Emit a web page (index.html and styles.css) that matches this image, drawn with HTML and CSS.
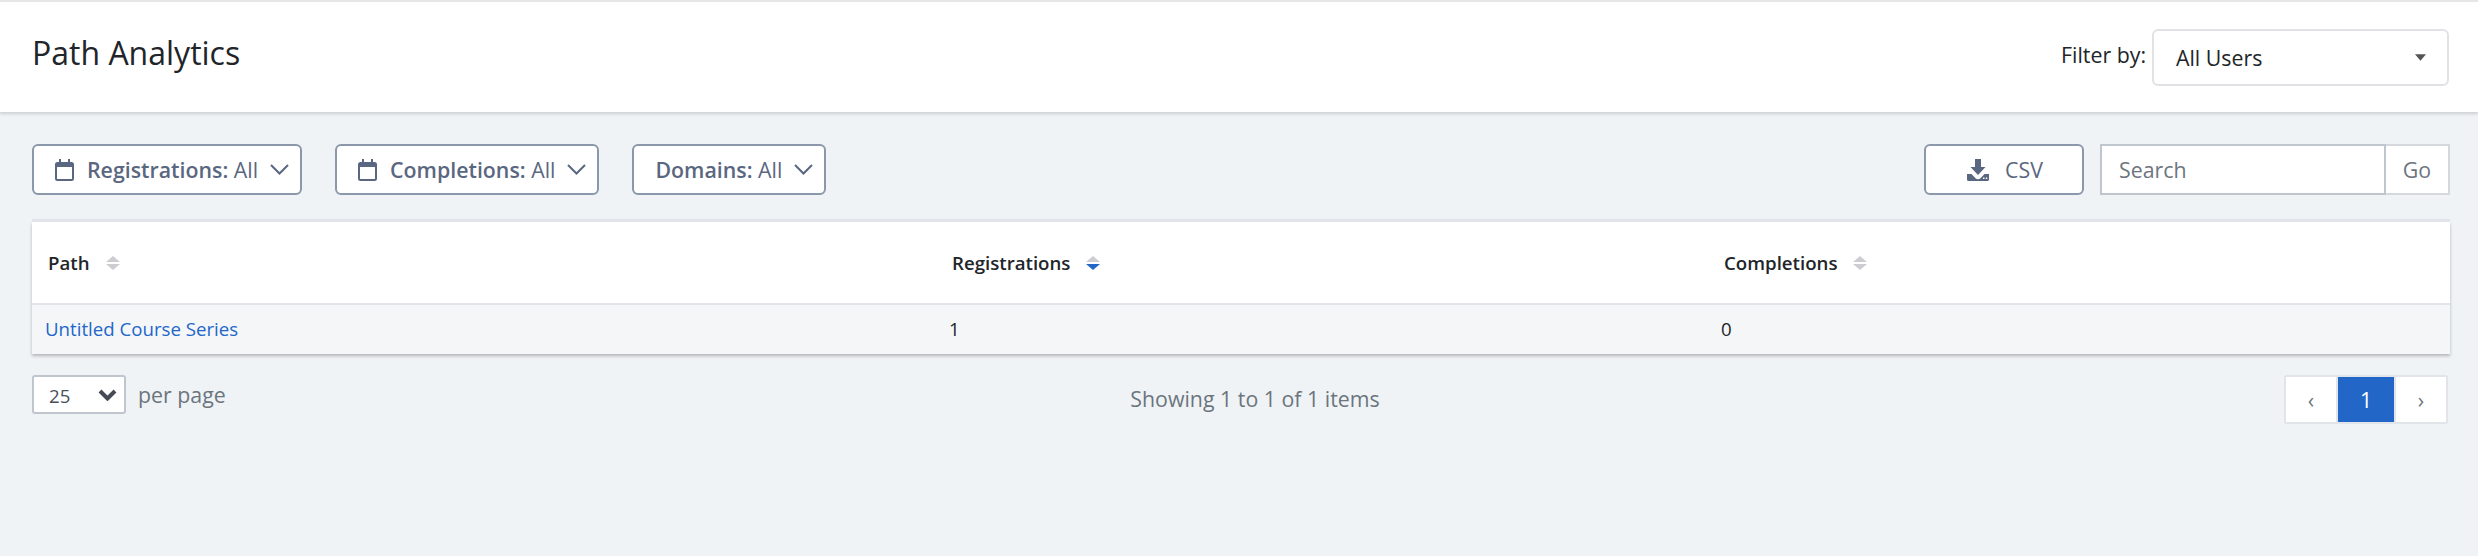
FILE: index.html
```html
<!DOCTYPE html>
<html lang="en">
<head>
<meta charset="utf-8">
<title>Path Analytics</title>
<link rel="stylesheet" href="styles.css">
</head>
<body>
<header class="page-header">
  <h1 class="page-title">Path Analytics</h1>
  <div class="user-filter">
    <span class="user-filter-label">Filter by:</span>
    <div class="user-select">
      <span>All Users</span>
      <svg class="caret" viewBox="0 0 12 7"><path d="M0 0h12L6 7z"/></svg>
    </div>
  </div>
</header>
<main class="content">
  <div class="toolbar">
    <div class="filters">
      <button class="btn filter-btn">
        <svg class="icon-cal" viewBox="0 0 19 22"><path d="M4 0h2v3h7V0h2v3h1.500A2.500 2.500 0 0 1 19 5.500v14a2.500 2.500 0 0 1-2.500 2.500h-14A2.500 2.500 0 0 1 0 19.500v-14A2.500 2.500 0 0 1 2.500 3H4zM2 8v11.500c0 .3.200.5.500.5h14c.3 0 .5-.2.500-.5V8z"/></svg>
        <span class="filter-text"><b>Registrations:</b> All</span>
        <svg class="icon-chev" viewBox="0 0 19 11"><path d="M1 1l8.500 8.500L18 1"/></svg>
      </button>
      <button class="btn filter-btn">
        <svg class="icon-cal" viewBox="0 0 19 22"><path d="M4 0h2v3h7V0h2v3h1.500A2.500 2.500 0 0 1 19 5.500v14a2.500 2.500 0 0 1-2.500 2.500h-14A2.500 2.500 0 0 1 0 19.500v-14A2.500 2.500 0 0 1 2.500 3H4zM2 8v11.500c0 .3.200.5.500.5h14c.3 0 .5-.2.500-.5V8z"/></svg>
        <span class="filter-text"><b>Completions:</b> All</span>
        <svg class="icon-chev" viewBox="0 0 19 11"><path d="M1 1l8.500 8.500L18 1"/></svg>
      </button>
      <button class="btn filter-btn">
        <span class="filter-text"><b>Domains:</b> All</span>
        <svg class="icon-chev" viewBox="0 0 19 11"><path d="M1 1l8.500 8.500L18 1"/></svg>
      </button>
    </div>
    <div class="actions">
      <button class="btn csv-btn">
        <svg class="icon-dl" viewBox="0 0 22 22"><path d="M8 0h6v8h4.500L11 16 3.500 8H8z"/><path fill-rule="evenodd" d="M0 15h4.500l4 4.300c1.400 1.200 3.600 1.200 5 0l4-4.300H22v5.500c0 .8-.7 1.500-1.500 1.500h-19C.7 22 0 21.300 0 20.500zM16 18.500v1.500h1.500v-1.500zm2.800 0v1.500h1.500v-1.500z"/></svg>
        <span>CSV</span>
      </button>
      <div class="search">
        <input class="search-input" type="text" placeholder="Search">
        <button class="search-go">Go</button>
      </div>
    </div>
  </div>

  <table class="data-table">
    <colgroup>
      <col class="col-path"><col class="col-reg"><col class="col-comp">
    </colgroup>
    <thead>
      <tr>
        <th><span class="th-inner">Path <svg class="sort" viewBox="0 0 14 14"><path class="sort-off" d="M7 0l7 6H0z"/><path class="sort-off" d="M0 8h14l-7 6z"/></svg></span></th>
        <th><span class="th-inner">Registrations <svg class="sort" viewBox="0 0 14 14"><path class="sort-off" d="M7 0l7 6H0z"/><path class="sort-on" d="M0 8h14l-7 6z"/></svg></span></th>
        <th><span class="th-inner">Completions <svg class="sort" viewBox="0 0 14 14"><path class="sort-off" d="M7 0l7 6H0z"/><path class="sort-off" d="M0 8h14l-7 6z"/></svg></span></th>
      </tr>
    </thead>
    <tbody>
      <tr>
        <td><a class="link" href="#">Untitled Course Series</a></td>
        <td>1</td>
        <td>0</td>
      </tr>
    </tbody>
  </table>

  <div class="table-footer">
    <div class="per-page">
      <div class="per-select">
        <span>25</span>
        <svg class="per-chev" viewBox="0 0 19 12"><path d="M2 2l7.500 7.500L17 2"/></svg>
      </div>
      <span class="per-label">per page</span>
    </div>
    <div class="showing">Showing 1 to 1 of 1 items</div>
    <nav class="pager">
      <a class="page-btn" href="#">‹</a>
      <a class="page-btn page-active" href="#">1</a>
      <a class="page-btn" href="#">›</a>
    </nav>
  </div>
</main>
</body>
</html>
```
FILE: styles.css
```css
* { box-sizing: border-box; }
html, body { margin: 0; height: 100%; }
body {
  background: #eff3f6;
  font-family: "Open Sans", sans-serif;
  color: #212529;
  overflow: hidden;
}
.page-header {
  height: 113px;
  border-top: 2px solid #e6e6e6;
  background: #fff;
  border-bottom: 1px solid #d4d6d9;
  box-shadow: 0 1px 3px rgba(0,0,0,.15);
  display: flex;
  align-items: center;
  justify-content: space-between;
  padding: 0 29px 0 32px;
}
.page-title {
  margin: 0 0 8px;
  font-size: 32px;
  font-weight: 400;
  line-height: 44px;
  color: #212529;
}
.user-filter { display: flex; align-items: center; gap: 6px; }
.user-filter-label { font-size: 21.33px; line-height: 28px; margin-bottom: 5px; }
.user-select {
  width: 297px;
  height: 57px;
  border: 2px solid #e0e2e5;
  border-radius: 6px;
  display: flex;
  align-items: center;
  justify-content: space-between;
  padding: 0 21px 0 22px;
  font-size: 21.33px;
  background: #fff;
}
.caret { width: 11px; height: 7px; fill: #555; }

.toolbar {
  display: flex;
  justify-content: space-between;
  padding: 31px 28px 0 32px;
}
.filters { display: flex; gap: 33px; }
.actions { display: flex; gap: 16px; }
.btn {
  height: 51px;
  background: #fff;
  border: 2px solid #8b98ab;
  border-radius: 6px;
  color: #5a6780;
  font-family: inherit;
  font-size: 21.33px;
  display: flex;
  align-items: center;
  padding: 0;
}
.filter-btn { padding: 0 11px 0 21px; gap: 13px; }
.filter-text { font-weight: 400; white-space: nowrap; }
.filter-text b { font-weight: 600; }
.icon-cal { width: 19px; height: 22px; fill: #5a6780; flex: none; }
.icon-chev { width: 19px; height: 11px; margin-left: -1px; fill: none; stroke: #5a6780; stroke-width: 2; flex: none; }
.csv-btn { width: 160px; padding-left: 41px; gap: 16px; }
.icon-dl { width: 22px; height: 22px; fill: #5a6780; }
.search { display: flex; }
.search-input {
  width: 286px;
  height: 51px;
  border: 2px solid #c0c6ce;
  background: #fff;
  padding: 0 17px;
  font-family: inherit;
  font-size: 21.33px;
  outline: none;
}
.search-input::placeholder { color: #6c757d; opacity: 1; }
.search-go {
  width: 64px;
  height: 51px;
  border: 2px solid #d5d9de;
  border-left: 0;
  background: #fff;
  color: #6c757d;
  font-family: inherit;
  font-size: 21.33px;
  padding: 0;
}

.data-table {
  width: 2418px;
  margin: 27px 0 0 32px;
  border-collapse: collapse;
  table-layout: fixed;
  background: #fff;
  box-shadow: 0 -3px 0 #e1e4e8, 0 2px 3px rgba(0,0,0,.25);
}
.col-path { width: 904px; }
.col-reg { width: 772px; }
.col-comp { width: 742px; }
.data-table th {
  height: 82px;
  padding: 0 0 0 16px;
  text-align: left;
  font-size: 18.67px;
  font-weight: 600;
  border-bottom: 2px solid #e1e4e8;
}
.th-inner { display: inline-flex; align-items: center; gap: 16px; }
.sort { width: 14px; height: 14px; }
.sort-off { fill: #cbcdd0; }
.sort-on { fill: #2266c8; }
.data-table td {
  height: 50px;
  padding: 0 0 2px 13px;
  background: #f5f6f8;
  font-size: 18.67px;
}
.link { color: #2266c8; text-decoration: none; }

.table-footer {
  display: grid;
  grid-template-columns: 1fr auto 1fr;
  align-items: start;
  padding: 21px 30px 0 32px;
}
.per-page { display: flex; align-items: center; gap: 12px; }
.per-select {
  width: 94px;
  height: 39px;
  background: #fff;
  border: 2px solid #c0c6ce;
  border-radius: 3px;
  display: flex;
  align-items: center;
  justify-content: space-between;
  padding: 1px 7px 0 15px;
  font-size: 18.67px;
  color: #495057;
}
.per-chev { width: 19px; height: 12px; fill: none; stroke: #444b55; stroke-width: 4; }
.per-label { font-size: 21.33px; color: #6c757d; }
.showing { font-size: 21.33px; color: #6c757d; padding: 9px 0 0 30px; }
.pager {
  justify-self: end;
  display: flex;
  gap: 2px;
  padding: 1px;
  height: 49px;
  background: #e1e4e8;
  border-radius: 2px;
  border: 1px solid #e1e4e8;
}
.page-btn {
  width: 50px;
  display: flex;
  align-items: center;
  justify-content: center;
  background: #fff;
  color: #6c757d;
  font-size: 21.33px;
  text-decoration: none;
}
.page-active { width: 56px; background: #2266c8; color: #fff; }
```
